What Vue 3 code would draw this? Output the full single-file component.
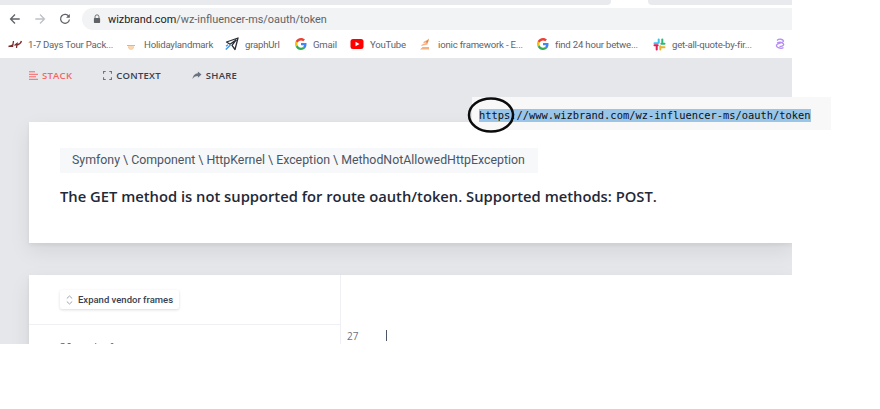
<template>
  <div class="screen">
    <div class="shot">
      <!-- Tabs -->
      <div class="tabstrip">
        <div class="tab-gray left"></div>
        <div class="tab-gap"></div>
        <div class="tab-gray right"></div>
      </div>

      <!-- Toolbar -->
      <div class="toolbar">
        <div class="nav-buttons">
          <svg width="12" height="12" viewBox="0 0 14 14" class="nav-icon">
            <path d="M12.5 7H2M7 1.8 1.8 7 7 12.2" fill="none" stroke="#5f6368" stroke-width="1.5" />
          </svg>
          <svg width="12" height="12" viewBox="0 0 14 14" class="nav-icon">
            <path d="M1.5 7H12M7 1.8 12.2 7 7 12.2" fill="none" stroke="#bdc1c6" stroke-width="1.5" />
          </svg>
          <svg width="12" height="12" viewBox="0 0 14 14" class="nav-icon">
            <path d="M11.6 4.2A5.2 5.2 0 1 0 12.2 7.6" fill="none" stroke="#5f6368" stroke-width="1.5" />
            <path d="M12.6 1.2v4.4H8.2z" fill="#5f6368" />
          </svg>
        </div>
        <div class="address">
          <svg width="8" height="10" viewBox="0 0 9 11" class="lock">
            <path d="M2.3 4.5V3a2.2 2.2 0 0 1 4.4 0v1.5" fill="none" stroke="#5f6368" stroke-width="1" />
            <rect x="1" y="4.3" width="7" height="5.7" rx="0.8" fill="#5f6368" />
          </svg>
          <span class="host">wizbrand.com</span><span class="path">/wz-influencer-ms/oauth/token</span>
        </div>
      </div>

      <!-- Bookmarks -->
      <div class="bookmarks">
        <div v-for="b in bookmarks" :key="b.label" class="bookmark" :style="{ width: b.width + 'px' }">
          <svg v-if="b.icon === 'tour'" width="14" height="14" viewBox="0 0 14 14">
            <path d="M.5 9.500C3 9 4.500 8.500 5.500 7M5.500 4 4.500 10M6.500 8.500 9 6.500 8.500 11M9 8C11 7.500 13 6 13.500 4" fill="none" stroke="#7b2d2d" stroke-width="1.300" />
          </svg>
          <svg v-else-if="b.icon === 'holiday'" width="14" height="14" viewBox="0 0 14 14">
            <path d="M3 8.500h8M4 10h6" stroke="#f5b066" stroke-width="1" />
            <path d="M4.500 11a3 2.400 0 0 0 5 0" fill="none" stroke="#f5b066" stroke-width="1" />
          </svg>
          <svg v-else-if="b.icon === 'plane'" width="14" height="14" viewBox="0 0 14 14">
            <path d="M13 1 1.500 5 5 7.200 11 3 7 8.400 10 12.500z" fill="none" stroke="#2b2f36" stroke-width="1.300" stroke-linejoin="round" />
            <path d="M5.500 8 .8 12.600M3 7.800 1 9.200" stroke="#3b9ae8" stroke-width="1.400" />
          </svg>
          <svg v-else-if="b.icon === 'google'" width="12" height="12" viewBox="0 0 48 48">
            <path fill="#EA4335" d="M24 9.500c3.500 0 6.700 1.300 9.100 3.500l6.800-6.800C35.900 2.400 30.400 0 24 0 14.600 0 6.600 5.400 2.600 13.300l7.900 6.100C12.400 13.700 17.700 9.500 24 9.500z" />
            <path fill="#4285F4" d="M46.100 24.500c0-1.600-.1-3.100-.4-4.500H24v9h12.400c-.5 2.900-2.200 5.400-4.700 7l7.600 5.900c4.400-4.100 6.800-10.100 6.800-17.400z" />
            <path fill="#FBBC05" d="M10.500 28.600A14.500 14.500 0 0 1 9.700 24c0-1.600.3-3.200.8-4.600l-7.900-6.100A24 24 0 0 0 0 24c0 3.900.9 7.500 2.600 10.700z" />
            <path fill="#34A853" d="M24 48c6.500 0 11.900-2.100 15.900-5.800l-7.600-5.900c-2.100 1.400-4.900 2.300-8.200 2.300-6.300 0-11.600-4.200-13.500-9.900l-7.900 6.100C6.600 42.600 14.600 48 24 48z" />
          </svg>
          <svg v-else-if="b.icon === 'youtube'" width="14" height="14" viewBox="0 0 14 14">
            <rect x="0.500" y="2" width="13" height="10" rx="2.500" fill="#f00" />
            <path d="M5.500 4.700 9.500 7l-4 2.300z" fill="#fff" />
          </svg>
          <svg v-else-if="b.icon === 'ionic'" width="14" height="14" viewBox="0 0 14 14">
            <path d="M2 12.500h9V10H4.500zM3 9l6.500-1.500V5.500L4 7.500zM5 6.500l5.500-2V2.500L6 4.500z" fill="#f3b184" />
            <path d="M11 1.500 7.500 5l2 1.500z" fill="#e8853f" />
          </svg>
          <svg v-else-if="b.icon === 'slack'" width="13" height="13" viewBox="0 0 13 13">
            <rect x="4.700" y="0.500" width="2" height="5.200" rx="1" fill="#36c5f0" />
            <rect x="0.500" y="4.200" width="5" height="2" rx="1" fill="#36c5f0" />
            <rect x="7.300" y="4.700" width="5.200" height="2" rx="1" fill="#2eb67d" />
            <rect x="8.300" y="0.500" width="2" height="5" rx="1" fill="#2eb67d" />
            <rect x="6.300" y="7.300" width="2" height="5.200" rx="1" fill="#ecb22e" />
            <rect x="7.500" y="8.300" width="5" height="2" rx="1" fill="#ecb22e" />
            <rect x="0.500" y="6.300" width="5.200" height="2" rx="1" fill="#e01e5a" />
            <rect x="2.700" y="7.500" width="2" height="5" rx="1" fill="#e01e5a" />
          </svg>
          <svg v-else width="10" height="12" viewBox="0 0 10 12">
            <path d="M2 2.500C4 .5 8 1 8.500 3 9 5 2 5 1.500 7 1 9.500 6 11.500 8.500 9.500M2 5c2-1 5-1 6.500 1 1 1.500-2 2.500-4 2.500" fill="none" stroke="#b58cf5" stroke-width="1.300" />
          </svg>
          <span v-if="b.label" class="bookmark-label">{{ b.label }}</span>
        </div>
      </div>

      <!-- Ignition error page -->
      <div class="page">
        <div class="page-tabs">
          <div class="page-tab active">
            <svg width="9" height="9" viewBox="0 0 9 9">
              <path d="M0 .8h6M0 3.300h9M0 5.800h7M0 8.300h9" stroke="#f56565" stroke-width="1" />
            </svg>
            STACK
          </div>
          <div class="page-tab">
            <svg width="9" height="9" viewBox="0 0 10 10">
              <path d="M.6 3V.6H3M7 .6h2.400V3M9.400 7v2.400H7M3 9.400H.6V7" fill="none" stroke="#6b7280" stroke-width="1.200" />
            </svg>
            CONTEXT
          </div>
          <div class="page-tab">
            <svg width="10" height="9" viewBox="0 0 11 10">
              <path d="M6.500 .5 10.500 4 6.500 7.500V5.500C3.500 5.500 1.800 6.500.5 9 .8 5.500 3 2.800 6.500 2.500z" fill="#6b7280" />
            </svg>
            SHARE
          </div>
        </div>

        <div class="card error-card">
          <div class="exception">Symfony \ Component \ HttpKernel \ Exception \ MethodNotAllowedHttpException</div>
          <div class="message">The GET method is not supported for route oauth/token. Supported methods: POST.</div>
        </div>

        <div class="card stack-card">
          <div class="frames">
            <div class="frames-top">
              <button class="expand">
                <svg width="7" height="10" viewBox="0 0 7 10">
                  <path d="M.8 3.500 3.500 1l2.700 2.500M.8 6.500 3.500 9l2.700-2.500" fill="none" stroke="#9ca3af" stroke-width="1" />
                </svg>
                Expand vendor frames
              </button>
            </div>
            <div class="frame-row">36 vendor frames ...</div>
          </div>
          <div class="code">
            <span class="line-no">27</span>
            <span class="caret"></span>
          </div>
        </div>
      </div>
    </div>

    <!-- Pasted URL with hand drawn circle -->
    <div class="url-box">
      <span class="url-selected">https://www.wizbrand.com/wz-influencer-ms/oauth/token</span>
    </div>
    <svg class="circle" width="50" height="40" viewBox="0 0 50 40">
      <ellipse cx="24" cy="19" rx="22" ry="16.500" fill="none" stroke="#0b0b0b" stroke-width="2.500" />
    </svg>
  </div>
</template>

<script setup>
const bookmarks = [
  { icon: 'tour', label: '1-7 Days Tour Pack...', width: 116 },
  { icon: 'holiday', label: 'Holidaylandmark', width: 101 },
  { icon: 'plane', label: 'graphUrl', width: 70 },
  { icon: 'google', label: 'Gmail', width: 55 },
  { icon: 'youtube', label: 'YouTube', width: 68 },
  { icon: 'ionic', label: 'ionic framework - E...', width: 119 },
  { icon: 'google', label: 'find 24 hour betwe...', width: 116 },
  { icon: 'slack', label: 'get-all-quote-by-fir...', width: 122 },
  { icon: 'swirl', label: '', width: 14 }
]
</script>

<style scoped>
.screen {
  position: relative;
  width: 880px;
  height: 409px;
  overflow: hidden;
  background: #fff;
  font-family: "Open Sans", "Liberation Sans", sans-serif;
}

.shot {
  display: flex;
  flex-direction: column;
  width: 792px;
  height: 344px;
  overflow: hidden;
}

.tabstrip {
  display: flex;
  height: 5px;
  flex: none;
}

.tab-gray {
  background: #e8eaed;
}

.tab-gray.left {
  width: 611px;
  border-bottom-right-radius: 4px;
}

.tab-gap {
  width: 37px;
}

.tab-gray.right {
  flex: 1;
  border-bottom-left-radius: 4px;
}

.toolbar {
  display: flex;
  align-items: center;
  height: 25px;
  flex: none;
  padding-top: 3px;
  box-sizing: border-box;
}

.nav-buttons {
  display: flex;
  align-items: center;
  gap: 13px;
  width: 82px;
  padding-left: 9px;
  box-sizing: border-box;
}

.nav-icon {
  flex: none;
}

.address {
  display: flex;
  align-items: center;
  flex: 1;
  height: 22px;
  padding-left: 11px;
  background: #f1f3f4;
  border-radius: 11px 0 0 11px;
  font-family: Roboto, "Liberation Sans", sans-serif;
  font-size: 10.900px;
}

.lock {
  margin-right: 7px;
}

.host {
  color: #202124;
}

.path {
  color: #5f6368;
}

.bookmarks {
  display: flex;
  align-items: center;
  height: 28px;
  flex: none;
  padding-left: 8px;
}

.bookmark {
  display: flex;
  align-items: center;
  gap: 6px;
  flex: none;
}

.bookmark svg {
  flex: none;
}

.bookmark-label {
  font-family: Roboto, "Liberation Sans", sans-serif;
  font-size: 9.600px;
  letter-spacing: -0.2px;
  color: #5f6368;
  white-space: nowrap;
}

.page {
  flex: 1;
  background: #e5e7eb;
  padding-left: 29px;
  min-height: 0;
}

.page-tabs {
  display: flex;
  align-items: center;
  gap: 31px;
  height: 34px;
  font-size: 9.500px;
  font-weight: 600;
  letter-spacing: 0.25px;
  color: #374151;
}

.page-tab {
  display: flex;
  align-items: center;
  gap: 4px;
}

.page-tab.active {
  color: #f56565;
}

.card {
  background: #fff;
  box-shadow: 0 8px 20px rgba(0, 0, 0, 0.08), 0 2px 4px rgba(0, 0, 0, 0.06);
}

.error-card {
  height: 121px;
  margin-top: 30px;
  padding: 25px 0 0 31px;
  box-sizing: border-box;
}

.exception {
  display: inline-block;
  height: 25px;
  line-height: 25px;
  padding: 0 13px 0 12px;
  background: #f7f8fa;
  font-family: Roboto, "Liberation Sans", sans-serif;
  font-size: 12.350px;
  color: #4b5563;
  white-space: nowrap;
}

.message {
  margin-top: 11px;
  font-size: 14.750px;
  font-weight: 600;
  line-height: 24px;
  color: #1f2937;
  white-space: nowrap;
}

.stack-card {
  display: flex;
  height: 100px;
  margin-top: 32px;
}

.frames {
  width: 311px;
  flex: none;
  border-right: 1px solid #eef0f3;
}

.frames-top {
  height: 50px;
  padding: 15px 0 0 31px;
  box-sizing: border-box;
  border-bottom: 1px solid #eef0f3;
}

.expand {
  display: flex;
  align-items: center;
  gap: 5px;
  height: 19px;
  padding: 0 6px;
  border: none;
  border-radius: 2px;
  background: #fff;
  box-shadow: 0 1px 3px rgba(0, 0, 0, 0.14);
  font-family: Roboto, "Liberation Sans", sans-serif;
  font-size: 9.500px;
  font-weight: 500;
  color: #374151;
  white-space: nowrap;
}

.frame-row {
  padding: 15px 0 0 31px;
  font-size: 10px;
  color: #4b5563;
}

.code {
  display: flex;
  align-items: flex-start;
  padding: 55px 0 0 6px;
}

.line-no {
  width: 39px;
  font-size: 10px;
  line-height: 12px;
  color: #6b7280;
}

.caret {
  width: 1px;
  height: 11px;
  background: #4b5563;
}

.url-box {
  position: absolute;
  left: 472px;
  top: 97px;
  width: 359px;
  height: 33px;
  padding: 12px 0 0 7px;
  box-sizing: border-box;
  background: #f8f8f8;
}

.url-selected {
  display: block;
  width: 332px;
  height: 13px;
  background: #99c5e8;
  font-family: "DejaVu Sans Mono", "Liberation Mono", monospace;
  font-size: 10.400px;
  line-height: 13px;
  color: #0d1014;
  white-space: nowrap;
}

.circle {
  position: absolute;
  left: 467px;
  top: 96px;
}
</style>

<style>
html,
body {
  margin: 0;
  background: #fff;
}
</style>
